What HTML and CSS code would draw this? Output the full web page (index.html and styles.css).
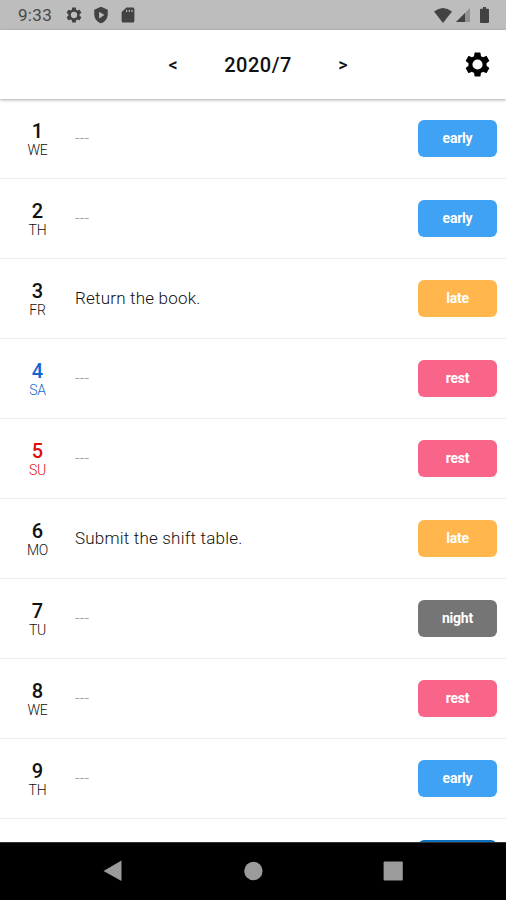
FILE: index.html
```html
<!DOCTYPE html>
<html lang="en">
<head>
<meta charset="utf-8">
<title>Shift calendar</title>
<link rel="stylesheet" href="styles.css">
</head>
<body>
<div class="screen">
  <div class="status">
    <span class="clock">9:33</span>
    <svg class="s-icon gear-s" viewBox="0 0 24 24"><use href="#gear"/></svg>
    <svg class="s-icon shield" viewBox="0 0 24 24"><path fill-rule="evenodd" d="M12 1 3 5v6c0 5.600 3.800 10.700 9 12 5.200-1.300 9-6.400 9-12V5zM9.500 7.500l7 4.500-7 4.500z"/></svg>
    <svg class="s-icon sd" viewBox="0 0 24 24"><path fill-rule="evenodd" d="M18.500 2H10L3.500 8v12c0 1.100.9 2 2 2h13c1.100 0 2-.9 2-2V4c0-1.100-.9-2-2-2zM9.500 8V5H11v3zm3.500 0V5h1.500v3zM16.500 8V5H18v3z"/></svg>
    <svg class="wifi" viewBox="0 0 18 15"><path d="M0 3.500Q9-3.500 18 3.500L9 15z"/></svg>
    <svg class="signal" viewBox="0 0 14 14"><path opacity=".35" d="M14 0v14H0z"/><path d="M9 5v9H0z"/></svg>
    <svg class="battery" viewBox="0 0 9 16"><path d="M3 0h3v1.700h2q1 0 1 1V15q0 1-1 1H1q-1 0-1-1V2.700q0-1 1-1h2z"/></svg>
  </div>
  <header class="bar">
    <span class="arrow">&lt;</span>
    <h1 class="month">2020/7</h1>
    <span class="arrow">&gt;</span>
    <svg class="gear" viewBox="0 0 24 24"><path id="gear" fill-rule="evenodd" d="M19.430 12.980c.04-.32.070-.64.070-.98s-.03-.66-.07-.98l2.110-1.650c.19-.15.240-.42.120-.64l-2-3.460c-.12-.22-.39-.3-.61-.22l-2.490 1c-.52-.4-1.080-.73-1.690-.98l-.38-2.650C14.460 2.180 14.250 2 14 2h-4c-.25 0-.46.180-.49.420l-.38 2.650c-.61.250-1.170.59-1.690.98l-2.490-1c-.23-.09-.49 0-.61.220l-2 3.460c-.13.220-.07.490.120.640l2.110 1.650c-.04.320-.07.650-.07.980s.03.660.07.980l-2.110 1.650c-.19.150-.24.420-.12.640l2 3.460c.12.220.39.300.61.220l2.490-1c.52.400 1.080.730 1.690.980l.38 2.650c.03.240.24.420.49.420h4c.25 0 .46-.18.490-.42l.38-2.650c.61-.25 1.170-.59 1.690-.98l2.490 1c.23.090.490 0 .610-.22l2-3.460c.12-.22.070-.49-.12-.64zM12 16.200a4.200 4.200 0 1 1 0-8.400 4.200 4.200 0 0 1 0 8.400z"/></svg>
  </header>
  <main class="list">
    <div class="row"><div class="date"><b>1</b><span>WE</span></div><p class="note empty">---</p><span class="tag early">early</span></div>
    <div class="row"><div class="date"><b>2</b><span>TH</span></div><p class="note empty">---</p><span class="tag early">early</span></div>
    <div class="row"><div class="date"><b>3</b><span>FR</span></div><p class="note">Return the book.</p><span class="tag late">late</span></div>
    <div class="row"><div class="date sat"><b>4</b><span>SA</span></div><p class="note empty">---</p><span class="tag rest">rest</span></div>
    <div class="row"><div class="date sun"><b>5</b><span>SU</span></div><p class="note empty">---</p><span class="tag rest">rest</span></div>
    <div class="row"><div class="date"><b>6</b><span>MO</span></div><p class="note">Submit the shift table.</p><span class="tag late">late</span></div>
    <div class="row"><div class="date"><b>7</b><span>TU</span></div><p class="note empty">---</p><span class="tag night">night</span></div>
    <div class="row"><div class="date"><b>8</b><span>WE</span></div><p class="note empty">---</p><span class="tag rest">rest</span></div>
    <div class="row"><div class="date"><b>9</b><span>TH</span></div><p class="note empty">---</p><span class="tag early">early</span></div>
    <div class="row"><div class="date"></div><p class="note"></p><span class="tag early next"></span></div>
  </main>
  <nav class="nav">
    <svg viewBox="0 0 20 22"><path d="M18.500.5v20.500L.5 11z"/></svg>
    <svg viewBox="0 0 20 22"><circle cx="10.400" cy="11" r="9.200"/></svg>
    <svg viewBox="0 0 20 22"><rect x=".6" y="1.400" width="19.200" height="19.200" rx="1"/></svg>
  </nav>
</div>
</body>
</html>
```
FILE: styles.css
```css
* { box-sizing: border-box; }
body {
  margin: 0;
  font-family: Roboto, "Liberation Sans", sans-serif;
  color: #111;
  background: #fff;
}
.screen {
  width: 506px;
  height: 900px;
  display: flex;
  flex-direction: column;
  overflow: hidden;
}
.status {
  flex: none;
  height: 30px;
  display: flex;
  align-items: center;
  padding: 0 17px 0 18px;
  background: #bdbdbd;
  color: #484848;
  fill: #424242;
}
.clock { width: 47px; font-size: 17px; letter-spacing: .3px; line-height: 30px; }
.s-icon { width: 18px; height: 18px; margin-right: 9px; }
.sd { margin-right: auto; }
.wifi { width: 18px; height: 15px; margin-right: 4px; }
.signal { width: 14px; height: 14px; margin-right: 10px; }
.battery { width: 9px; height: 16px; }
.bar {
  flex: none;
  height: 69px;
  display: grid;
  grid-template-columns: 26px 144px 26px 1fr;
  align-items: center;
  padding: 0 14px 0 160px;
  background: #fff;
  box-shadow: 0 1px 3px rgba(0, 0, 0, .35);
  z-index: 1;
}
.arrow { font-size: 18px; font-weight: 500; text-align: center; }
.month { margin: 0; font-size: 20px; font-weight: 500; letter-spacing: .5px; text-align: center; }
.gear { width: 29px; height: 29px; justify-self: end; fill: #000; }
.list { flex: 1; min-height: 0; overflow: hidden; }
.row {
  height: 80px;
  display: flex;
  align-items: center;
  padding: 0 9px 1px 0;
  border-bottom: 1px solid #ededed;
}
.date { width: 75px; padding-top: 2px; text-align: center; }
.date b { display: block; font-size: 20px; font-weight: 500; line-height: 22px; }
.date span { display: block; font-size: 14px; font-weight: 300; letter-spacing: -.2px; line-height: 16px; }
.sat { color: #1565d0; }
.sun { color: #e00d0d; }
.note { flex: 1; margin: 0; font-size: 17px; font-weight: 300; letter-spacing: .2px; color: #111; }
.empty { color: #999; font-size: 16px; }
.tag {
  width: 79px;
  height: 37px;
  border-radius: 6px;
  color: #fff;
  font-size: 14px;
  font-weight: 700;
  letter-spacing: -.2px;
  line-height: 36px;
  text-align: center;
}
.early { background: #3fa2f5; }
.late { background: #ffb74d; }
.rest { background: #f96588; }
.night { background: #757575; }
.next { background: #0b70bd; }
.nav {
  flex: none;
  height: 58px;
  display: flex;
  justify-content: space-between;
  align-items: center;
  padding: 0 103px 2px;
  background: #000;
  border-top: 1px solid #333;
  fill: #9b9b9b;
}
.nav svg { width: 20px; height: 22px; }
```
